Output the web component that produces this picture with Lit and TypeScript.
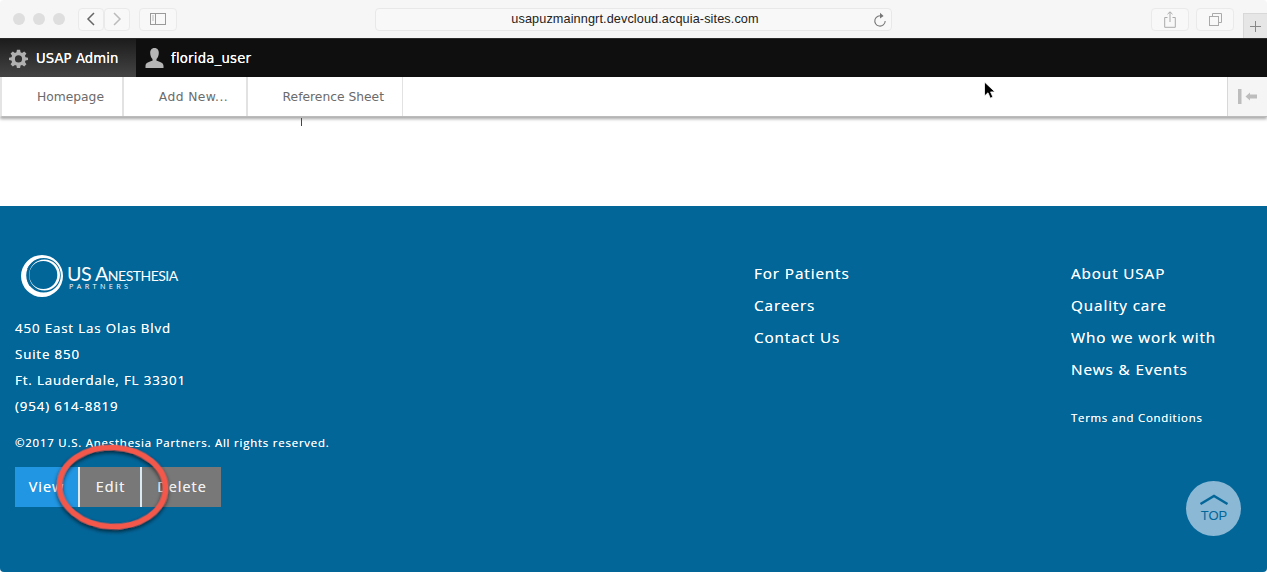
import { LitElement, html, css } from "lit";
import { customElement } from "lit/decorators.js";

@customElement("app-root")
export class AppRoot extends LitElement {
  static styles = css`
    :host { display: block; width: 1267px; height: 573px; position: relative; overflow: hidden; background: #fff; font-family: "Open Sans", sans-serif; }
    * { box-sizing: border-box; }
    .chrome { height: 38px; background: #f6f6f6; display: flex; align-items: center; padding: 0 0 0 13px; position: relative; border-radius: 4px 4px 0 0; }
    .dots { display: flex; gap: 8px; width: 65px; }
    .dot { width: 12px; height: 12px; border-radius: 50%; background: #dedede; }
    .btn { height: 23px; border: 1px solid #eaeaea; border-radius: 4px; background: #f8f8f8; display: flex; align-items: center; justify-content: center; }
    .nav { width: 26px; }
    .side { width: 38px; margin-left: 9px; }
    .url { width: 517px; margin-left: 198px; height: 23px; border: 1px solid #e8e8e8; border-radius: 4px; background: #f8f8f8; display: flex; align-items: center; justify-content: center; position: relative; font: 12.7px "Liberation Sans", sans-serif; color: #222; letter-spacing: 0.1px; padding-left: 3px; }
    .reload { position: absolute; right: 4px; top: 3px; }
    .share { width: 38px; margin-left: 259px; }
    .dup { width: 38px; margin-left: 7px; }
    .plus { position: absolute; right: 0; top: 13px; width: 24px; height: 25px; background: #e6e6e6; border-left: 1px solid #d8d8d8; border-top: 1px solid #d8d8d8; display: flex; align-items: center; justify-content: center; }

    .bar { height: 39px; background: #0f0f0f; border-top: 1px solid #2a2a2a; display: flex; font: 13.2px "DejaVu Sans", sans-serif; color: #fff; }
    .admin { width: 136px; background: linear-gradient(#1c1c1c, #444); display: flex; align-items: center; padding-left: 9px; gap: 8px; letter-spacing: 0.1px; text-shadow: 0 0 .6px #fff; }
    .user { display: flex; align-items: center; padding-left: 9px; gap: 7px; letter-spacing: 0.25px; text-shadow: 0 0 .6px #fff; }

    .tray { height: 40px; display: flex; background: #fff; border-left: 2px solid #e4e4e4; border-bottom: 1px solid #bbb; box-shadow: 0 2px 3px rgba(0,0,0,.35); position: relative; font: 12.3px "DejaVu Sans", sans-serif; color: #6b6b6b; }
    .tab { display: flex; align-items: center; justify-content: flex-end; border-right: 2px solid #e2e2e2; }
    .t1 { width: 122px; padding-right: 18px; }
    .t2 { width: 124px; padding-right: 18px; letter-spacing: 0.4px; }
    .t3 { width: 155px; padding-right: 18px; border-right: 1px solid #e2e2e2; }
    .collapse { margin-left: auto; width: 40px; background: #f5f5f5; border-left: 1px solid #d8d8d8; display: flex; align-items: center; justify-content: center; }
    .gap { height: 89px; }

    .footer { height: 366px; background: #036699; color: #fff; display: flex; position: relative; font-size: 15px; font-weight: 500; border-radius: 0 0 4px 4px; text-shadow: 0 0 .5px rgba(255,255,255,.8); }
    .left { width: 754px; padding: 48px 0 0 15px; }
    .logo { display: flex; height: 50px; padding-left: 6px; margin-bottom: 11px; }
    .wordmark { margin-left: 2px; padding-top: 11px; font-weight: 400; line-height: 1; text-shadow: none; }
    .wm1 { font: 400 19.7px/17px "Lato", sans-serif; font-variant: small-caps; letter-spacing: -0.5px; }
    .wm2 { font: 400 7.3px/9px "Open Sans", sans-serif; letter-spacing: 3.35px; margin-top: 0; padding-left: 2px; }
    .addr { font-size: 13.3px; line-height: 26px; letter-spacing: 0.85px; }
    .copy { font-size: 11.4px; letter-spacing: 0.8px; margin-top: 14px; line-height: 20px; }
    .tabs { display: flex; margin-top: 14px; height: 40px; font-size: 14.4px; letter-spacing: 1px; }
    .act { display: flex; align-items: center; justify-content: center; padding-bottom: 1px; background: #787878; color: #f0f0f0; border-right: 2px solid #dbe9f2; }
    .view { width: 65px; background: #2196e3; color: #fff; }
    .edit { width: 62px; padding-left: 1px; }
    .del { width: 79px; border: 0; padding-left: 1px; }
    .col { padding-top: 51px; display: flex; flex-direction: column; }
    .c2 { width: 317px; }
    .col a { height: 32px; display: flex; align-items: center; font-size: 15.3px; letter-spacing: 0.88px; }
    .col a.terms { font-size: 11.4px; margin-top: 22px; height: 20px; letter-spacing: 0.75px; }

    .top { position: absolute; left: 1186px; top: 481px; width: 55px; height: 55px; border-radius: 50%; background: #8ab8d5; color: #036699; font: 13px/1 "Liberation Sans", sans-serif; display: flex; flex-direction: column; align-items: center; padding: 13px 0 0 1px; gap: 4px; }
    .tick { position: absolute; left: 301px; top: 118px; width: 1px; height: 8px; background: #445; }
    .ring { position: absolute; left: 40px; top: 435px; pointer-events: none; }
    .cursor { position: absolute; left: 983px; top: 81px; }
  `;

  render() {
    return html`
      <div class="chrome">
        <div class="dots"><div class="dot"></div><div class="dot"></div><div class="dot"></div></div>
        <div class="btn nav"><svg width="12" height="16" viewBox="0 0 12 16"><path d="M9 2 3 8l6 6" fill="none" stroke="#666" stroke-width="1.5"/></svg></div>
        <div class="btn nav"><svg width="12" height="16" viewBox="0 0 12 16"><path d="m3 2 6 6-6 6" fill="none" stroke="#bbb" stroke-width="1.5"/></svg></div>
        <div class="btn side"><svg width="16" height="12" viewBox="0 0 16 12"><rect x=".5" y=".5" width="15" height="11" fill="none" stroke="#999"/><path d="M5.500 .5v11" stroke="#999"/><path d="M2 3h2M2 5h2M2 7h2" stroke="#bbb"/></svg></div>
        <div class="url">usapuzmainngrt.devcloud.acquia-sites.com
          <svg class="reload" width="14" height="16" viewBox="0 0 14 16"><path d="M9.200 4.200A5.200 5.200 0 1 0 12.200 9" fill="none" stroke="#777" stroke-width="1.100"/><path d="M7 .8 10.600 4 7 6.600z" fill="#777"/></svg>
        </div>
        <div class="btn share"><svg width="12" height="17" viewBox="0 0 12 17"><path d="M3.500 6.500H.7v9.800h10.600V6.500H8.500M6 11V1M3.500 3.200 6 .8l2.500 2.400" fill="none" stroke="#aaa"/></svg></div>
        <div class="btn dup"><svg width="13" height="13" viewBox="0 0 13 13"><path d="M3.500 3.500V.5h9v9h-3" fill="none" stroke="#aaa"/><rect x=".5" y="3.500" width="9" height="9" fill="none" stroke="#aaa"/></svg></div>
        <div class="plus"><svg width="11" height="11" viewBox="0 0 11 11"><path d="M5.500 0v11M0 5.500h11" stroke="#888"/></svg></div>
      </div>

      <div class="bar">
        <div class="admin">
          <svg width="19" height="19" viewBox="0 0 24 24"><path fill="#b0b0b0" fill-rule="evenodd" d="M10 1h4l.6 3.100 1.900.8L19.200 3 22 5.800l-1.900 2.700.8 1.900L24 11v3l-3.100.6-.8 1.900 1.900 2.700L19.200 22l-2.700-1.900-1.900.8L14 24h-4l-.6-3.100-1.900-.8L4.800 22 2 19.200l1.900-2.700-.8-1.900L0 14v-3l3.100-.6.8-1.900L2 5.800 4.800 3l2.700 1.900 1.900-.8zM12 8a4.500 4.500 0 1 0 0 9 4.500 4.500 0 0 0 0-9z"/></svg>
          USAP Admin
        </div>
        <div class="user">
          <svg width="19" height="20" viewBox="0 0 19 20"><path fill="#b5b5b5" d="M9.500 0c3 0 4.300 2.300 4.300 5 0 2.500-1 4.800-2.300 6v1.800c3 1 7 1.800 7 5.200v2H.5v-2c0-3.400 4-4.200 7-5.200V11C6.200 9.800 5.200 7.500 5.200 5c0-2.700 1.300-5 4.300-5z"/></svg>
          florida_user
        </div>
      </div>

      <div class="tray">
        <div class="tab t1">Homepage</div>
        <div class="tab t2">Add New...</div>
        <div class="tab t3">Reference Sheet</div>
        <div class="collapse"><svg width="20" height="15" viewBox="0 0 20 15"><rect x="0" y="0" width="3.500" height="15" fill="#bdbdbd"/><path d="M7.500 7.500 12 3.500v2h7v4h-7v2z" fill="#bdbdbd"/></svg></div>
      </div>
      <div class="gap"></div>

      <div class="footer">
        <div class="left">
          <div class="logo">
            <svg width="44" height="44" viewBox="0 0 44 44">
              <path fill="#fff" fill-rule="evenodd" d="M21 1a21 21 0 1 0 0 42 21 21 0 0 0 0-42zM22.500 4a17.300 17.300 0 1 1 0 34.600 17.300 17.300 0 0 1 0-34.600z"/>
              <path fill="#fff" fill-rule="evenodd" d="M23.500 5.500a15.500 15.500 0 1 0 0 31 15.500 15.500 0 0 0 0-31zM22.300 7a14 14 0 1 1 0 28 14 14 0 0 1 0-28z"/>
              <path d="M6.500 15a17 17 0 0 1 10-9M9 32a17 17 0 0 1-2-5" fill="none" stroke="#036699" stroke-width=".8"/>
            </svg>
            <div class="wordmark">
              <div class="wm1">US Anesthesia</div>
              <div class="wm2">PARTNERS</div>
            </div>
          </div>
          <div class="addr">450 East Las Olas Blvd<br>Suite 850<br>Ft. Lauderdale, FL 33301<br>(954) 614-8819</div>
          <div class="copy">©2017 U.S. Anesthesia Partners. All rights reserved.</div>
          <div class="tabs">
            <div class="act view">View</div>
            <div class="act edit">Edit</div>
            <div class="act del">Delete</div>
          </div>
        </div>
        <div class="col c2">
          <a>For Patients</a><a>Careers</a><a>Contact Us</a>
        </div>
        <div class="col">
          <a>About USAP</a><a>Quality care</a><a>Who we work with</a><a>News &amp; Events</a>
          <a class="terms">Terms and Conditions</a>
        </div>
      </div>

      <div class="tick"></div>
      <div class="top">
        <svg width="30" height="11" viewBox="0 0 30 11"><path d="M1.500 10 15 2l13.500 8" fill="none" stroke="#036699" stroke-width="2.400"/></svg>
        TOP
      </div>
      <svg class="ring" width="150" height="110" viewBox="0 0 150 110">
        <defs><filter id="s" x="-20%" y="-20%" width="140%" height="140%"><feDropShadow dx="0" dy="2" stdDeviation="2" flood-color="#000" flood-opacity=".7"/></filter></defs>
        <ellipse cx="72.500" cy="52" rx="53" ry="39.500" transform="rotate(3 72.500 52)" fill="none" stroke="#f4584c" stroke-width="5.500" filter="url(#s)"/>
      </svg>
      <svg class="cursor" width="13" height="19" viewBox="0 0 13 19"><path d="M1.500 1v14l3.500-3.200 2.300 5.400 2.600-1.100-2.300-5.200H12z" fill="#000" stroke="#fff" stroke-width=".8"/></svg>
    `;
  }
}
